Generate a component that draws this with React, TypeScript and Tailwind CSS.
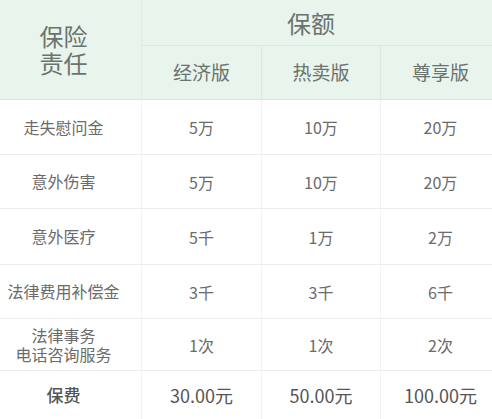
import React from 'react';

const rows: { name: string[]; values: string[]; h: string }[] = [
  { name: ['走失慰问金'], values: ['5万', '10万', '20万'], h: 'h-[55px]' },
  { name: ['意外伤害'], values: ['5万', '10万', '20万'], h: 'h-[54px]' },
  { name: ['意外医疗'], values: ['5千', '1万', '2万'], h: 'h-[56px]' },
  { name: ['法律费用补偿金'], values: ['3千', '3千', '6千'], h: 'h-[54px]' },
  { name: ['法律事务', '电话咨询服务'], values: ['1次', '1次', '2次'], h: 'h-[52px]' },
];

const font = { fontFamily: '"Noto Sans CJK SC", "Noto Sans", sans-serif' };

export default function App() {
  return (
    <div className="w-[492px] h-[419px] overflow-hidden bg-white" style={font}>
      <div className="grid grid-cols-[142px_120px_119px_119px] w-[500px]">
        {/* header */}
        <div className="row-span-2 h-[100px] bg-[#e9f4ed] border-r border-[#e2ece5] border-b border-b-[#dfe3e0] flex flex-col items-center justify-center pr-[14px] gap-[3px]">
          <div className="text-[24px] leading-[24px] text-[#6a736d]">保险</div>
          <div className="text-[24px] leading-[24px] text-[#6a736d]">责任</div>
        </div>
        <div className="col-span-3 h-[46px] bg-[#e9f4ed] border-b border-[#dde8e1] flex items-center justify-center pr-[20px]">
          <span className="text-[24px] text-[#6a736d] leading-none">保额</span>
        </div>
        {['经济版', '热卖版', '尊享版'].map((t, i) => (
          <div
            key={t}
            className={`h-[54px] bg-[#e9f4ed] border-b border-[#dfe3e0] flex items-center justify-center ${
              i < 2 ? 'border-r border-r-[#dde8e1]' : ''
            }`}
          >
            <span className="text-[19px] text-[#6a736d]">{t}</span>
          </div>
        ))}

        {/* body */}
        {rows.map((r) => (
          <React.Fragment key={r.name.join('')}>
            <div className={`${r.h} border-b border-[#ececec] border-r border-r-[#f2f2f2] flex flex-col items-center justify-center pr-[14px]`}>
              {r.name.map((n) => (
                <div key={n} className="text-[16px] leading-[19px] text-[#6b6b6b]">
                  {n}
                </div>
              ))}
            </div>
            {r.values.map((v, i) => (
              <div
                key={i}
                className={`${r.h} border-b border-[#ececec] flex items-center justify-center ${
                  i < 2 ? 'border-r border-r-[#f2f2f2]' : ''
                }`}
              >
                <span className="text-[16px] text-[#6b6b6b]">{v}</span>
              </div>
            ))}
          </React.Fragment>
        ))}

        {/* price */}
        <div className="h-[48px] border-r border-[#f2f2f2] flex items-center justify-center pr-[14px]">
          <span className="text-[17px] text-[#555] font-medium">保费</span>
        </div>
        {['30.00元', '50.00元', '100.00元'].map((v, i) => (
          <div
            key={v}
            className={`h-[48px] flex items-center justify-center ${i < 2 ? 'border-r border-[#f2f2f2]' : ''}`}
          >
            <span className="text-[18px] text-[#555]">{v}</span>
          </div>
        ))}
      </div>
    </div>
  );
}
